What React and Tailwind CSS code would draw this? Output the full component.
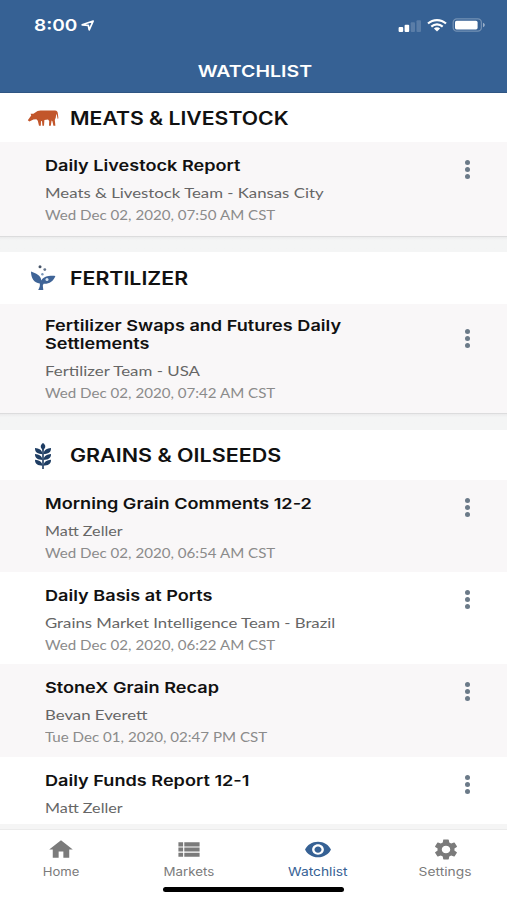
import { MdHome, MdViewList, MdRemoveRedEye, MdSettings } from 'react-icons/md';

const sections = [
  {
    title: 'MEATS & LIVESTOCK',
    icon: CowIcon,
    headClass: 'h-[49px] pt-[1px]',
    titleClass: 'scale-x-[1.178]',
    items: [
      { title: 'Daily Livestock Report', team: 'Meats & Livestock Team - Kansas City', date: 'Wed Dec 02, 2020, 07:50 AM CST', height: 'h-[94px]' },
    ],
  },
  {
    title: 'FERTILIZER',
    icon: SproutIcon,
    headClass: 'h-[52px]',
    titleClass: 'scale-x-[1.185]',
    items: [
      { title: 'Fertilizer Swaps and Futures Daily\nSettlements', team: 'Fertilizer Team - USA', teamClass: 'scale-x-[1.25]', date: 'Wed Dec 02, 2020, 07:42 AM CST', height: 'h-[109px]', tall: true },
    ],
  },
  {
    title: 'GRAINS & OILSEEDS',
    icon: WheatIcon,
    headClass: 'h-[50px] pt-[1px]',
    titleClass: 'scale-x-[1.194]',
    items: [
      { title: 'Morning Grain Comments 12-2', team: 'Matt Zeller', teamClass: 'scale-x-[1.195]', date: 'Wed Dec 02, 2020, 06:54 AM CST', height: 'h-[92px]' },
      { title: 'Daily Basis at Ports', team: 'Grains Market Intelligence Team - Brazil', date: 'Wed Dec 02, 2020, 06:22 AM CST', height: 'h-[92px]' },
      { title: 'StoneX Grain Recap', team: 'Bevan Everett', date: 'Tue Dec 01, 2020, 02:47 PM CST', height: 'h-[93px]' },
      { title: 'Daily Funds Report 12-1', team: 'Matt Zeller', teamClass: 'scale-x-[1.195]', height: 'h-[67px]' },
    ],
  },
];

const tabs = [
  { label: 'Home', icon: MdHome, labelClass: 'scale-x-[1.14]' },
  { label: 'Markets', icon: MdViewList, labelClass: 'scale-x-[1.16]' },
  { label: 'Watchlist', icon: MdRemoveRedEye, active: true, labelClass: 'scale-x-[1.2]' },
  { label: 'Settings', icon: MdSettings, labelClass: 'scale-x-[1.2]' },
];

function CowIcon() {
  return (
    <svg viewBox="0 0 32 18" className="w-8 h-[18px]" fill="#c2562b">
      <path d="M0.8 11.2 4.2 6.4 3.6 4.8 6.4 4.8 9.4 2.8C11 1.7 13 1.6 15 1.6H28C30 1.7 30.8 3 30.9 5L31.4 9.2 30.7 10 29.9 6.5 29.2 4.8 28.8 8.5 27.8 11 28.4 16.8H26.4L25.4 12.2 24.6 11.4 23.8 16.8H22L22.2 12 21 10.6 17.4 11 17 16.8H15.4L15 12.2 14 12 13.8 16.8H12L10.8 11.8 9.4 10.2 6.4 10.6 2.4 12.4Z" />
    </svg>
  );
}

function SproutIcon() {
  return (
    <svg viewBox="0 0 26 26" className="w-[26px] h-[26px]" fill="#3f6497">
      <path d="M1 6.5C6 8.5 10.8 10 11.3 15.5 13.5 11.4 19 10.5 25.4 11 23.5 16.4 19 19.2 13.6 18.8L12.8 20.4 13.3 25H8.2C9.8 22.5 10.1 20.5 9.8 18.6 4 17.8 1 13 1 6.5Z" />
      <circle cx="10" cy="1.8" r="1.5" fill="#475569" />
      <circle cx="14.8" cy="4.6" r="1.4" fill="#64748b" />
      <circle cx="12.4" cy="9.2" r="1.2" fill="#7895b8" />
      <circle cx="17" cy="14.5" r="1.5" fill="#dce8f3" />
    </svg>
  );
}

function WheatIcon() {
  return (
    <svg viewBox="0 0 18 26" className="w-[18px] h-[26px]" fill="#1e3d63">
      <path d="M9 0C12 2.2 12 4.8 9 7 6 4.8 6 2.2 9 0Z" />
      <path d="M8.2 6H9.8V26H8.2Z" />
      <path d="M1 5C5 5.4 8 6.6 8.6 11.2 4 11 0.8 9.6 1 5ZM17 5C13 5.4 10 6.6 9.4 11.2 14 11 17.2 9.6 17 5Z" />
      <path d="M1 10.9C5 11.3 8 12.4 8.6 16.9 4 16.7 0.8 15.4 1 10.9ZM17 10.9C13 11.3 10 12.4 9.4 16.9 14 16.7 17.2 15.4 17 10.9Z" />
      <path d="M1 16.7C5 17.1 8 18.2 8.6 22.7 4 22.5 0.8 21.2 1 16.7ZM17 16.7C13 17.1 10 18.2 9.4 22.7 14 22.5 17.2 21.2 17 16.7Z" />
    </svg>
  );
}

function StatusBar() {
  return (
    <div className="h-[50px] flex items-center justify-between pl-[34px] pr-[21px]">
      <div className="flex items-center gap-[3px]">
        <span className="w-[44px] text-[16px] leading-5 font-semibold"><span className="inline-block origin-left scale-x-[1.19]">8:00</span></span>
        <svg viewBox="0 0 14 13" className="w-[14px] h-[13px]" fill="none" stroke="currentColor" strokeWidth="1.7" strokeLinejoin="round">
          <path d="M1.2 5.8 12.2 2 8.2 10.8 7.3 6.3Z" />
        </svg>
      </div>
      <div className="flex items-center">
        <svg viewBox="0 0 24 13" className="w-6 h-[13px]" fill="currentColor">
          <rect x="0.6" y="8" width="4.6" height="5" rx="1" />
          <rect x="6.6" y="5.8" width="4.6" height="7.2" rx="1" />
          <rect x="12.7" y="3.3" width="4.3" height="9.7" rx="1" opacity="0.18" />
          <rect x="18.5" y="1.2" width="4.5" height="11.8" rx="1" opacity="0.18" />
        </svg>
        <svg viewBox="0 0 20 13" className="w-5 h-[13px] ml-[5px]" fill="none" stroke="currentColor" strokeWidth="2.1">
          <path d="M1 4.6C6-.1 14-.1 19 4.6M4.3 7.6C7.6 4.6 12.4 4.6 15.7 7.6" />
          <path d="M6.9 9.5C8.8 7.9 11.2 7.9 13.1 9.5L10 12.5Z" fill="currentColor" stroke="none" />
        </svg>
        <svg viewBox="0 0 34 14" className="w-[34px] h-[14px] ml-[5px]" fill="none">
          <rect x="1.2" y="0.8" width="28.2" height="12.4" rx="3.6" stroke="currentColor" strokeWidth="1.3" opacity="0.3" />
          <rect x="3" y="2.8" width="22.6" height="8.6" rx="1.6" fill="currentColor" />
          <path d="M31 4.8C33.4 5.6 33.4 8.4 31 9.2Z" fill="currentColor" opacity="0.5" />
        </svg>
      </div>
    </div>
  );
}

function Row({ item, shaded }) {
  return (
    <div className={`${item.height} ${shaded ? 'bg-[#f9f7f8]' : 'bg-white'} shrink-0 flex items-start justify-between pl-[45px] pr-[37px]`}>
      <div className={`${item.tall ? 'pt-[13px]' : 'pt-[15px]'} whitespace-pre`}>
        <h3 className="origin-left scale-x-[1.207] w-fit text-[15px] leading-[17.5px] font-semibold text-[#111]">{item.title}</h3>
        <p className={`origin-left ${item.teamClass || 'scale-x-[1.242]'} w-fit ${item.tall ? 'mt-[10px]' : 'mt-[9px]'} text-[13.5px] leading-[18px] font-['Lato',sans-serif] text-[#666]`}>{item.team}</p>
        {item.date && (
          <p className="origin-left scale-x-[1.209] w-fit mt-[5px] text-[12.5px] leading-[18px] font-['Lato',sans-serif] text-[#8b8b8b]">{item.date}</p>
        )}
      </div>
      <div className={`flex flex-col gap-[2.5px] ${item.tall ? 'mt-[25px]' : 'mt-[18px]'}`}>
        <span className="w-[5px] h-[4.5px] rounded-full bg-[#6b7a88]" />
        <span className="w-[5px] h-[4.5px] rounded-full bg-[#6b7a88]" />
        <span className="w-[5px] h-[4.5px] rounded-full bg-[#6b7a88]" />
      </div>
    </div>
  );
}

export default function App() {
  return (
    <div className="w-[507px] h-[900px] flex flex-col overflow-hidden bg-white font-['Inter',sans-serif]">
      <header className="h-[93px] shrink-0 bg-[#366194] border-b border-[#2f5583] text-white">
        <StatusBar />
        <h1 className="h-[42px] flex items-center justify-center text-[16px] font-semibold">
          <span className="inline-block scale-x-[1.22] translate-x-[1px]">WATCHLIST</span>
        </h1>
      </header>

      <main className="h-[731px] shrink-0 flex flex-col overflow-hidden">
        {sections.map((section, i) => (
          <section key={section.title} className="shrink-0">
            {i > 0 && <div className={`${i === 1 ? 'h-4' : 'h-[17px]'} bg-linear-to-b from-[#ebebec] to-[#f4f5f5] to-20% border-t border-[#dcdcdd]`} />}
            <div className={`${section.headClass} flex items-center bg-white`}>
              <div className="w-[69.5px] pl-[17px] flex justify-center shrink-0">
                <section.icon />
              </div>
              <h2 className={`origin-left ${section.titleClass} text-[18px] font-semibold text-[#111] whitespace-nowrap`}>{section.title}</h2>
            </div>
            {section.items.map((item, n) => (
              <Row key={item.title} item={item} shaded={n % 2 === 0} />
            ))}
          </section>
        ))}
      </main>

      <div className="h-[6px] shrink-0 bg-[#f5f5f5] border-b border-[#ebebeb]" />
      <nav className="h-[56px] shrink-0 grid grid-cols-[122px_134px_124px_131px]">
        {tabs.map(({ label, icon: Icon, active, labelClass }) => (
          <div key={label} className={`flex flex-col items-center pt-[7px] ${active ? 'text-[#366194]' : 'text-[#7b7b7b]'}`}>
            <Icon className="w-[26px] h-[25px] scale-x-[1.13]" />
            <span className={`mt-[2px] ${labelClass} text-[11.5px] leading-[16px]`}>{label}</span>
          </div>
        ))}
      </nav>
      <div className="w-[181px] h-[5px] shrink-0 ml-[163px] mt-[1px] rounded-full bg-black" />
    </div>
  );
}
